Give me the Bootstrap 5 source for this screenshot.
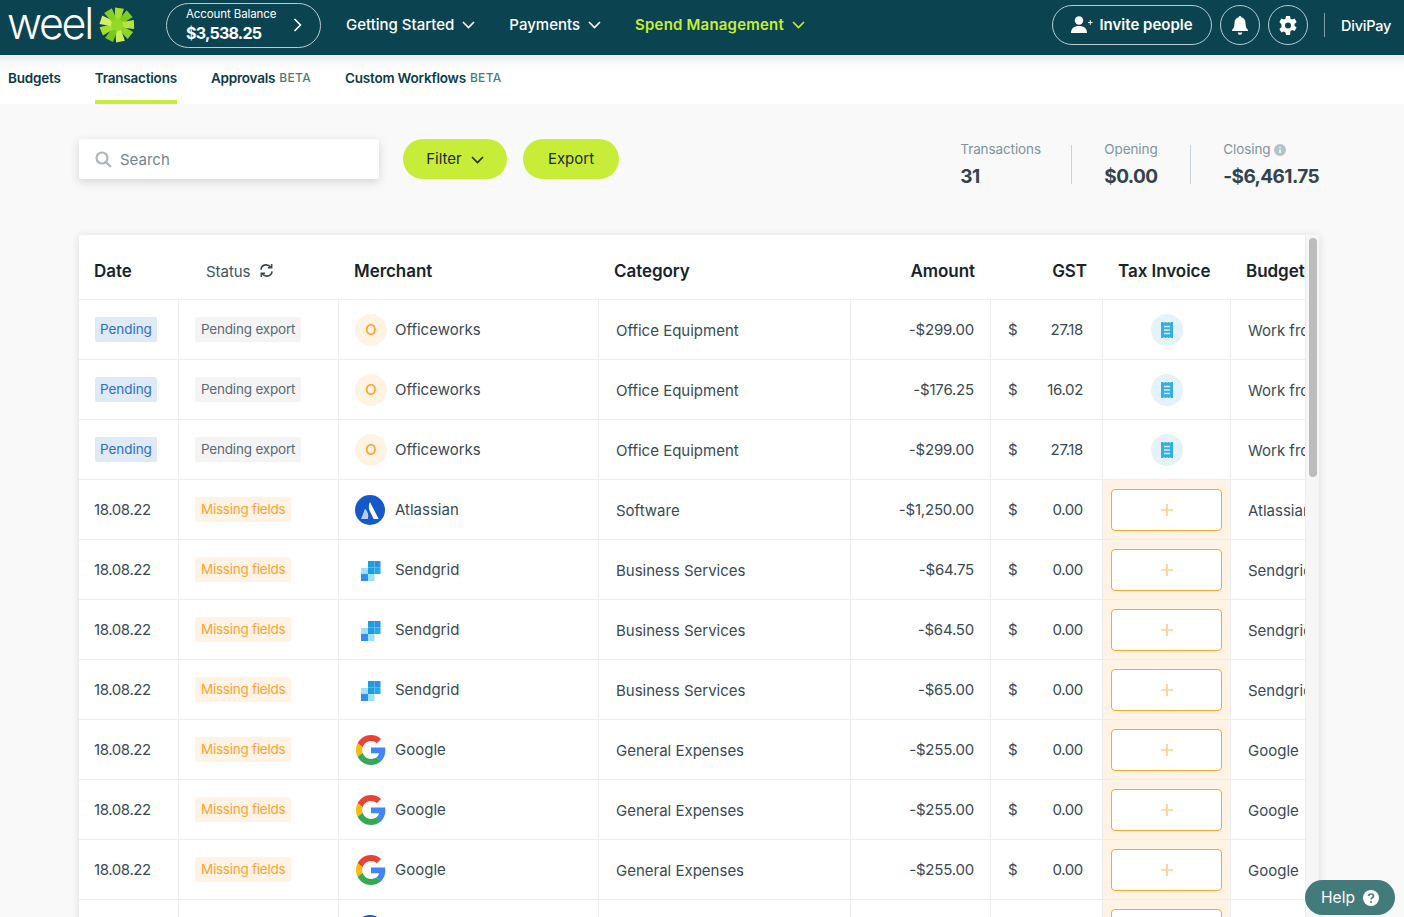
<!doctype html>
<html lang="en">
<head>
<meta charset="utf-8">
<title>Weel Transactions</title>
<link href="https://cdn.jsdelivr.net/npm/bootstrap@5.3.0/dist/css/bootstrap.min.css" rel="stylesheet">
<style>
html,body{height:917px;overflow:hidden}
body{font-family:Inter,"Liberation Sans",sans-serif;background:#f9f9f9;color:#3a4a55;font-size:15px}
.topbar{height:55px;background:#0b4450;color:#fff;padding:0 13px 5px 8px}
.wordmark{font-size:43px;font-weight:300;letter-spacing:-2.300px;line-height:50px;margin-top:-4px;margin-left:-1px;flex:none}
.spark{width:36px;height:36px;margin-left:7px;flex:none}
.balance{width:155px;height:45px;border:1px solid #b8cdd0;border-radius:23px;margin-left:31px;padding:0 18px 0 19px;line-height:1;flex:none}
.balance-l{font-size:11.500px;margin-bottom:5px;letter-spacing:-.1px}
.balance-v{font-size:16px;font-weight:700;letter-spacing:-.75px}
.menu-i{font-size:15px;font-weight:500;color:#fff;gap:8px;padding-top:1px}
.menu-sp{color:#c8ed38;font-weight:600;letter-spacing:.2px}
.menu-i svg{width:13px;height:8px;margin-top:-1px}
.menu-list{margin-left:25px;gap:34px}
.pill-o{height:40px;border:1px solid #b8cdd0;border-radius:20px;color:#fff}
.invite{width:160px;font-weight:600;font-size:15px;gap:6px;padding-top:1px}
.invite svg{margin-top:-1px}
.round-b{width:40px}
.vrule{width:1px;height:24px;background:#7f9ea3;margin:0 8px}
.org{font-size:14.500px;font-weight:500;letter-spacing:-.25px;padding-top:1px}
.subnav{height:49px;background:linear-gradient(#e9e9ea 0,#f9f9f9 8px,#fff 18px);padding-left:8px;gap:34px}
.subnav-i{height:49px;display:flex;align-items:center;font-size:13.500px;font-weight:600;color:#0b3b47;padding-bottom:3px;letter-spacing:-.2px}
.subnav-on{box-shadow:inset 0 -4px 0 #c8ed38}
.beta{color:#4b7c7c;font-size:12px;font-weight:500;margin-left:4px;letter-spacing:.3px}
.tools{padding:35px 85px 0 79px;height:131px}
.searchbox{width:300px;height:40px;background:#fff;border-radius:3px;box-shadow:0 3px 10px rgba(40,50,60,.18);color:#72858f;padding:2px 0 0 16px;gap:8px;font-size:15px}
.searchbox svg{margin-top:-2px}
.lime-b{height:40px;background:#c8ed38;border:0;border-radius:20px;color:#1c2c33;font-size:15px;font-weight:400;padding:1px 0 0;gap:9px;justify-content:center}
.b-filter{width:104px;margin-left:24px}
.b-export{width:96px;margin-left:16px}
.stat-l{font-size:13.500px;color:#7f949f;line-height:1;letter-spacing:-.1px;padding-top:4px}
.stat-v{font-size:19px;font-weight:700;color:#33434d;line-height:1;margin-top:10px;letter-spacing:-.6px}
.stat-sep{width:1px;height:39px;background:#c9d4da;margin-top:6px}
.stat-a{width:111px}
.stat-b{width:118px;padding-left:32px}
.stat-c{padding-left:32px}
.panel{margin-left:79px;width:1240px;background:#fff;box-shadow:0 1px 8px rgba(30,40,50,.14);border-radius:3px 3px 0 0;position:relative;overflow:hidden;height:700px}
.panel-in{width:1226px;overflow:hidden}
.tx{table-layout:fixed;width:1380px;border-collapse:separate;border-spacing:0;margin:0}
.tx th{height:65px;font-size:17px;font-weight:600;color:#17242d;border-bottom:1px solid #ededed;padding:10px 15px 0;white-space:nowrap;vertical-align:middle;letter-spacing:-.05px}
.tx td{height:60px;border-bottom:1px solid #ededed;border-right:1px solid #ededed;padding:1px 16px 0;vertical-align:middle;white-space:nowrap;color:#3a4a55;font-size:15px}
.tx th.st{font-size:15px;font-weight:400;color:#44535d;padding-left:27px}
.tx th.st svg{width:15px;height:15px;margin:-4px 0 0 4px}
.tx th.ra{text-align:right;padding-right:16px}
.tx td.dt{padding-left:15px;letter-spacing:-.4px}
.tx td.dt.dtx{padding-top:2px}
.tx td.amt{text-align:right;letter-spacing:-.2px}
.tx td.cat{padding:3px 0 0 17px}
.tx td.inv{padding:0;text-align:center}
.tx td.miss{background:#fff3e5;padding:0 8px}
.tx td.bud{border-right:0;padding:3px 0 0 17px;overflow:hidden}
.tx td.tg{padding-top:0}
.gstcell{padding-right:3px;padding-left:1px}
.gstnum{letter-spacing:-.35px}
.tag{display:inline-block;height:25px;line-height:25px;padding:0 6px;border-radius:2px;font-size:13.500px;letter-spacing:-.2px}
.tag-bl{background:#e0e9f6;color:#2f6fc4;padding:0 5px;letter-spacing:-.05px;margin-left:1px}
.tag-gr{background:#f4f4f5;color:#5c6b75}
.tag-or{background:#fff3e5;color:#f9a533;letter-spacing:-.25px}
.merch{gap:10px}
.m-ic{width:30px;height:30px;flex:none;display:block}
.g-ic{margin-left:1px;margin-right:-1px}
.o-ic{width:32px;height:32px;background:#fff3e3;border-radius:50%;color:#f9a533;font-size:15px;font-weight:500;display:flex;align-items:center;justify-content:center;margin-right:-2px}
.rec{width:32px;height:32px;background:#e4f2f9;border-radius:50%;display:inline-flex;align-items:center;justify-content:center}
.plus{display:flex;align-items:center;justify-content:center;height:42px;width:111px;background:#fff;border:1px solid #f9a533;border-radius:4px}
.sbar{position:absolute;right:0;top:0;bottom:0;width:14px;background:#f6f6f6;border-left:1px solid #ececec}
.sthumb{position:absolute;left:3px;top:3px;width:8px;height:239px;background:#bcbcbc;border-radius:4px}
.help{position:fixed;left:1305px;top:880px;width:90px;height:35px;background:#437a7a;color:#fff;border-radius:18px;gap:8px;font-size:15.500px}
</style>
</head>
<body>
<svg width="0" height="0" class="position-absolute">
<defs>
<symbol id="chev" viewBox="0 0 13 8"><path d="M1 1l5.500 5.500L12 1" fill="none" stroke="currentColor" stroke-width="1.600"/></symbol>
<symbol id="goog" viewBox="0 0 48 48">
<path fill="#EA4335" d="M24 9.500c3.540 0 6.710 1.220 9.210 3.600l6.850-6.850C35.900 2.380 30.470 0 24 0 14.620 0 6.510 5.380 2.560 13.220l7.980 6.190C12.430 13.720 17.740 9.500 24 9.500z"/>
<path fill="#4285F4" d="M46.980 24.550c0-1.570-.15-3.090-.38-4.550H24v9.020h12.940c-.58 2.960-2.260 5.480-4.780 7.180l7.730 6c4.510-4.180 7.090-10.360 7.090-17.650z"/>
<path fill="#FBBC05" d="M10.530 28.590c-.48-1.450-.76-2.990-.76-4.590s.27-3.140.76-4.590l-7.980-6.190C.92 16.460 0 20.120 0 24c0 3.880.92 7.540 2.560 10.780l7.970-6.190z"/>
<path fill="#34A853" d="M24 48c6.480 0 11.930-2.130 15.890-5.810l-7.730-6c-2.150 1.450-4.920 2.300-8.160 2.300-6.260 0-11.570-4.220-13.470-9.910l-7.980 6.190C6.510 42.620 14.620 48 24 48z"/>
</symbol>
<symbol id="grid" viewBox="0 0 30 30">
<rect x="13" y="6" width="6.500" height="6.500" fill="#1a9fdc"/><rect x="19.500" y="6" width="6" height="6.500" fill="#2f8fea"/><rect x="13" y="12.500" width="6.500" height="6.500" fill="#1a9fdc"/><rect x="19.500" y="12.500" width="6" height="6.500" fill="#27a9e6"/><rect x="6" y="13" width="7" height="6" fill="#9ee1f5"/><rect x="6" y="19" width="7" height="7" fill="#2f8fea"/><rect x="13" y="19" width="6.500" height="7" fill="#9ee1f5"/>
</symbol>
<symbol id="atl" viewBox="0 0 32 32">
<circle cx="16" cy="16" r="16" fill="#1558c9"/><path d="M16 7.500c-1.800 3.500-1.600 7 .2 10.500l3.800 7.500h5.200z" fill="#fff"/><path d="M11.500 15.500c-.4-.6-1-.5-1.300.1L6.500 25.500h7.200c1-3.500.3-7-2.200-10z" fill="#b8cdf0"/>
</symbol>
<symbol id="rcpt" viewBox="0 0 12 16"><path d="M0 0h2l1 1 1-1h1l1 1 1-1h1l1 1 1-1h2v16h-2l-1-1-1 1H7l-1-1-1 1H4l-1-1-1 1H0z" fill="#36aee0"/><path d="M3 4.500h6M3 8h6M3 11.500h6" stroke="#d4eef9" stroke-width="1.300"/></symbol>
<symbol id="plusic" viewBox="0 0 14 14"><path d="M7 1v12M1 7h12" stroke="#fdd08f" stroke-width="1.700"/></symbol>
</defs>
</svg>

<header class="topbar d-flex align-items-center">
  <div class="wordmark">weel</div>
  <svg class="spark" viewBox="-18 -18 36 36" aria-hidden="true">
    <polygon points="-2,0 -4.500,-17 4.500,-17 2,0" fill="#a6e02e" transform="rotate(8)"/>
    <polygon points="-2,0 -4.500,-17 4.500,-17 2,0" fill="#7fcb22" transform="rotate(48)"/>
    <polygon points="-2,0 -4.500,-17 4.500,-17 2,0" fill="#b5e640" transform="rotate(88)"/>
    <polygon points="-2,0 -4.500,-17 4.500,-17 2,0" fill="#8ed626" transform="rotate(128)"/>
    <polygon points="-2,0 -4.500,-17 4.500,-17 2,0" fill="#c9ee5a" transform="rotate(168)"/>
    <polygon points="-2,0 -4.500,-17 4.500,-17 2,0" fill="#78c61f" transform="rotate(208)"/>
    <polygon points="-2,0 -4.500,-17 4.500,-17 2,0" fill="#a6e02e" transform="rotate(248)"/>
    <polygon points="-2,0 -4.500,-17 4.500,-17 2,0" fill="#d4f06a" transform="rotate(288)"/>
    <polygon points="-2,0 -4.500,-17 4.500,-17 2,0" fill="#86d024" transform="rotate(328)"/>
    <circle r="6" fill="#93d928"/>
  </svg>
  <div class="balance d-flex align-items-center justify-content-between">
    <div><div class="balance-l">Account Balance</div><div class="balance-v">$3,538.25</div></div>
    <svg width="9" height="14" viewBox="0 0 9 14"><path d="M1.500 1l6 6-6 6" fill="none" stroke="#fff" stroke-width="1.600"/></svg>
  </div>
  <nav class="menu-list d-flex align-items-center">
    <div class="menu-i d-flex align-items-center">Getting Started <svg><use href="#chev"/></svg></div>
    <div class="menu-i d-flex align-items-center">Payments <svg><use href="#chev"/></svg></div>
    <div class="menu-i menu-sp d-flex align-items-center">Spend Management <svg><use href="#chev"/></svg></div>
  </nav>
  <div class="ms-auto d-flex align-items-center gap-2">
    <div class="pill-o invite d-flex align-items-center justify-content-center">
      <svg width="22" height="18" viewBox="0 0 22 18" fill="#fff"><circle cx="8" cy="4.500" r="4.200"/><path d="M0 17c0-4.500 3-7 8-7s8 2.500 8 7z"/><path d="M17 6.500h4.500M19.250 4.200v4.600" stroke="#fff" stroke-width="1"/></svg>
      Invite people
    </div>
    <div class="pill-o round-b d-flex align-items-center justify-content-center">
      <svg width="16" height="19" viewBox="0 0 16 19" fill="#fff"><path d="M8 0c.8 0 1.300.6 1.300 1.300C12 2 13.500 4 13.500 7c0 4 1 5.500 2.500 7v1H0v-1c1.500-1.500 2.500-3 2.500-7 0-3 1.500-5 4.200-5.700C6.700.6 7.200 0 8 0z"/><path d="M5.800 16.500h4.400c0 1.400-1 2.300-2.200 2.300s-2.200-.9-2.200-2.300z"/></svg>
    </div>
    <div class="pill-o round-b d-flex align-items-center justify-content-center">
      <svg width="18" height="19" viewBox="0 0 18 19"><path d="M7 0h4l.5 2.700 1.600.9 2.500-1 2 3.500-2.100 1.800v1.800L17.600 11.500l-2 3.400-2.500-.9-1.600.9L11 19H7l-.5-2.600-1.600-.9-2.500.9-2-3.400 2.100-1.800V8.400L.4 6.100l2-3.500 2.500 1 1.600-.9z" fill="#fff"/><circle cx="9" cy="9.500" r="3" fill="#0b4450"/></svg>
    </div>
    <div class="vrule"></div>
    <div class="org">DiviPay</div>
  </div>
</header>

<nav class="subnav d-flex">
  <div class="subnav-i">Budgets</div>
  <div class="subnav-i subnav-on">Transactions</div>
  <div class="subnav-i">Approvals<span class="beta">BETA</span></div>
  <div class="subnav-i">Custom Workflows<span class="beta">BETA</span></div>
</nav>

<section class="tools d-flex align-items-start">
  <div class="searchbox d-flex align-items-center">
    <svg width="17" height="17" viewBox="0 0 17 17" fill="none" stroke="#a9b8bf" stroke-width="2.200"><circle cx="7" cy="7" r="5.500"/><path d="M11 11l5 5"/></svg>
    Search
  </div>
  <button class="lime-b b-filter d-flex align-items-center">Filter <svg width="13" height="8"><use href="#chev"/></svg></button>
  <button class="lime-b b-export d-flex align-items-center">Export</button>
  <div class="ms-auto d-flex">
    <div class="stat-a"><div class="stat-l">Transactions</div><div class="stat-v">31</div></div>
    <div class="stat-sep"></div>
    <div class="stat-b"><div class="stat-l">Opening</div><div class="stat-v">$0.00</div></div>
    <div class="stat-sep"></div>
    <div class="stat-c"><div class="stat-l d-flex align-items-center gap-1">Closing <svg width="12" height="12" viewBox="0 0 12 12"><circle cx="6" cy="6" r="6" fill="#b4c2ca"/><path d="M6 5.200v3.800M6 2.700v1.300" stroke="#fff" stroke-width="1.500"/></svg></div><div class="stat-v">-$6,461.75</div></div>
  </div>
</section>

<section class="panel">
  <div class="panel-in">
    <table class="tx">
      <colgroup><col style="width:100px"><col style="width:160px"><col style="width:260px"><col style="width:252px"><col style="width:140px"><col style="width:112px"><col style="width:128px"><col style="width:228px"></colgroup>
      <thead>
        <tr>
          <th>Date</th>
          <th class="st">Status <svg viewBox="0 0 16 16" fill="none" stroke="#3a4a55" stroke-width="1.700"><path d="M2 7c.5-3 2.700-5 5.700-5 2 0 3.500.8 4.800 2.500M14 9c-.5 3-2.700 5-5.700 5-2 0-3.500-.8-4.800-2.500"/><path d="M13.500 1v4h-4M2.500 15v-4h4"/></svg></th>
          <th>Merchant</th>
          <th>Category</th>
          <th class="ra">Amount</th>
          <th class="ra">GST</th>
          <th>Tax Invoice</th>
          <th>Budget</th>
        </tr>
      </thead>
      <tbody id="rows"></tbody>
    </table>
  </div>
  <div class="sbar"><div class="sthumb"></div></div>
</section>

<div class="help d-flex align-items-center justify-content-center">Help
  <svg width="16" height="16" viewBox="0 0 16 16"><circle cx="8" cy="8" r="8" fill="#fff"/><path d="M5.500 6.200C5.700 4.800 6.700 4 8 4c1.500 0 2.500.9 2.500 2.100 0 1.800-2.500 1.800-2.500 3.500" fill="none" stroke="#437a7a" stroke-width="1.700"/><circle cx="8" cy="12" r="1.100" fill="#437a7a"/></svg>
</div>

<script>
var data=[
["P","Pending export","o","Officeworks","Office Equipment","-$299.00","27.18","Work from home"],
["P","Pending export","o","Officeworks","Office Equipment","-$176.25","16.02","Work from home"],
["P","Pending export","o","Officeworks","Office Equipment","-$299.00","27.18","Work from home"],
["18.08.22","Missing fields","atl","Atlassian","Software","-$1,250.00","0.00","Atlassian"],
["18.08.22","Missing fields","grid","Sendgrid","Business Services","-$64.75","0.00","Sendgrid"],
["18.08.22","Missing fields","grid","Sendgrid","Business Services","-$64.50","0.00","Sendgrid"],
["18.08.22","Missing fields","grid","Sendgrid","Business Services","-$65.00","0.00","Sendgrid"],
["18.08.22","Missing fields","goog","Google","General Expenses","-$255.00","0.00","Google"],
["18.08.22","Missing fields","goog","Google","General Expenses","-$255.00","0.00","Google"],
["18.08.22","Missing fields","goog","Google","General Expenses","-$255.00","0.00","Google"],
["18.08.22","Missing fields","atl","Atlassian","Software","-$255.00","0.00","Atlassian"]];
var h="";
data.forEach(function(r){
  var pend=r[0]==="P";
  var ic=r[2]==="o"?'<div class="o-ic">O</div>':'<svg class="m-ic'+(r[2]==="goog"?' g-ic':'')+'"><use href="#'+r[2]+'"/></svg>';
  h+='<tr><td class="dt '+(pend?'tg':'dtx')+'">'+(pend?'<span class="tag tag-bl">Pending</span>':r[0])+'</td>'+
  '<td class="tg"><span class="tag '+(pend?'tag-gr':'tag-or')+'">'+r[1]+'</span></td>'+
  '<td><div class="merch d-flex align-items-center">'+ic+'<span>'+r[3]+'</span></div></td>'+
  '<td class="cat">'+r[4]+'</td><td class="amt">'+r[5]+'</td>'+
  '<td><div class="gstcell d-flex justify-content-between"><span>$</span><span class="gstnum">'+r[6]+'</span></div></td>'+
  '<td class="inv'+(pend?'':' miss')+'">'+(pend?'<span class="rec"><svg width="12" height="16"><use href="#rcpt"/></svg></span>':'<span class="plus"><svg width="14" height="14"><use href="#plusic"/></svg></span>')+'</td>'+
  '<td class="bud">'+r[7]+'</td></tr>';
});
document.getElementById("rows").innerHTML=h;
</script>
</body>
</html>
